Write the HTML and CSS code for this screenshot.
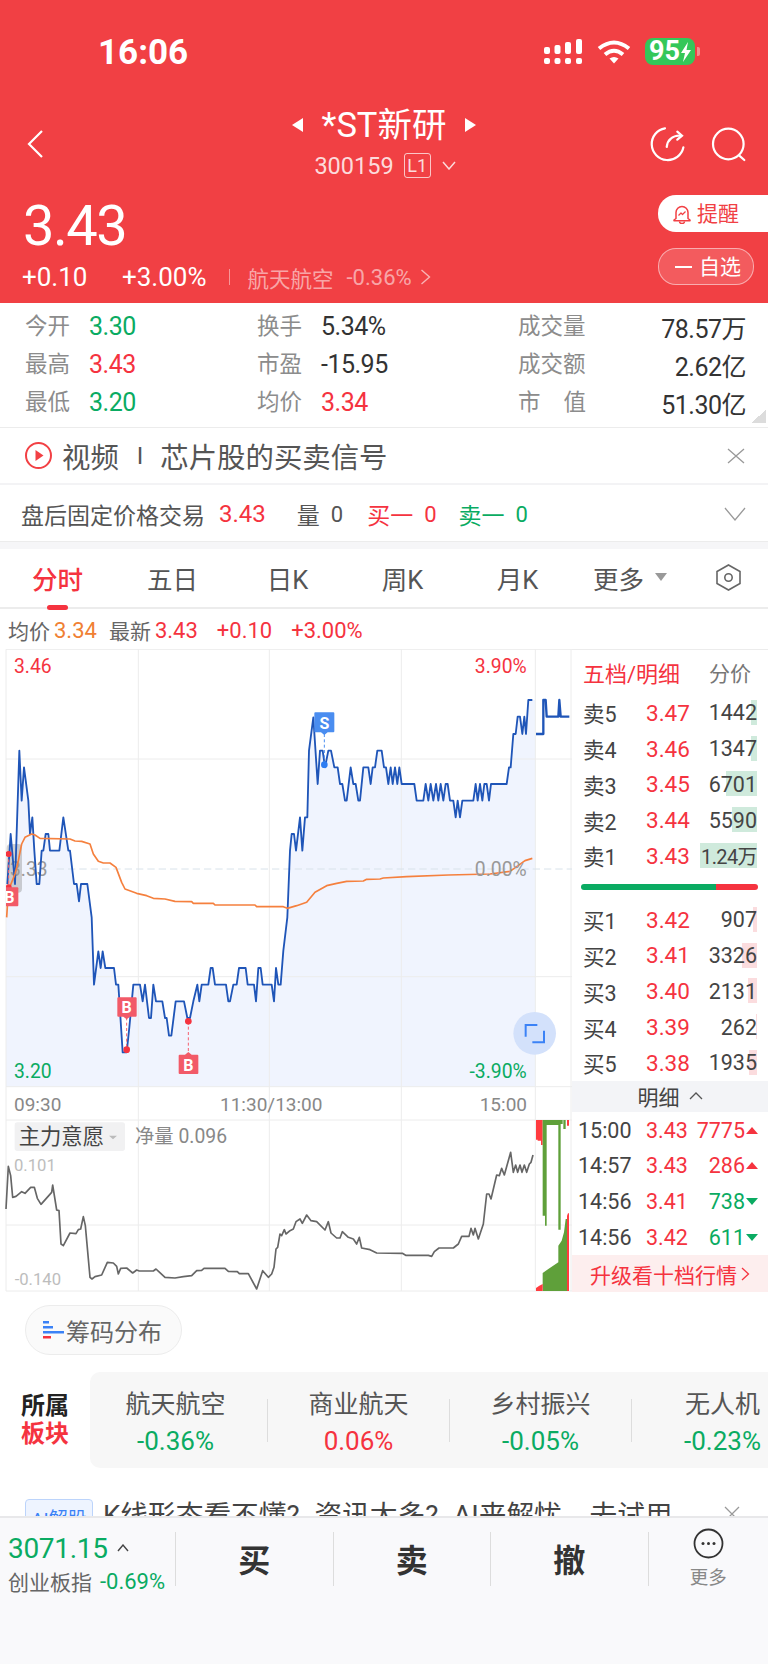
FILE: index.html
```html
<!DOCTYPE html>
<html lang="zh-CN">
<head>
    <meta charset="UTF-8">
    <meta name="viewport" content="width=device-width, initial-scale=1.0">
    <title>*ST新研</title>
    <link rel="stylesheet" href="styles.css">
</head>
<body>
<div class="page">
    <header class="header">
        <div class="status-bar">
            <span class="clock">16:06</span>
            <div class="status-icons">
                <svg class="signal" width="40" height="26" viewBox="0 0 40 26" fill="#fff">
                    <rect x="0" y="8" width="6" height="7" rx="2"/><rect x="10.5" y="6" width="6" height="9" rx="2"/><rect x="21" y="3" width="6" height="12" rx="2"/><rect x="32" y="0" width="6" height="15" rx="2"/>
                    <rect x="0" y="19" width="6" height="6" rx="2"/><rect x="10.5" y="19" width="6" height="6" rx="2"/><rect x="21" y="19" width="6" height="6" rx="2"/><rect x="32" y="19" width="6" height="6" rx="2"/>
                </svg>
                <svg class="wifi" width="34" height="24" viewBox="0 0 34 24" fill="none" stroke="#fff" stroke-width="4">
                    <path d="M2 8.5Q17 -3.5 32 8.5"/><path d="M8 14.5Q17 7 26 14.5"/>
                    <path d="M12.5 18.5Q17 15.5 21.5 18.5L17 23.5Z" fill="#fff" stroke="none"/>
                </svg>
                <div class="battery"><span>95</span><svg width="10" height="20" viewBox="0 0 10 20" fill="#fff"><path d="M7 0 0 11h4l-2 9 8-12H5.5z"/></svg></div>
                <i class="battery-nub"></i>
            </div>
        </div>
        <nav class="nav">
            <svg class="back" width="20" height="30" viewBox="0 0 20 30" fill="none" stroke="#fff" stroke-width="2.2"><path d="M17 2 4 15l13 13"/></svg>
            <div class="nav-center">
                <div class="stock-name">
                    <i class="tri-left"></i>
                    <span>*ST新研</span>
                    <i class="tri-right"></i>
                </div>
                <div class="stock-code">
                    <span>300159</span>
                    <b class="level">L1</b>
                    <svg width="14" height="9" viewBox="0 0 14 9" fill="none" stroke="#fff" stroke-opacity=".8" stroke-width="1.5"><path d="M1 1l6 7 6-7"/></svg>
                </div>
            </div>
            <div class="nav-right">
                <svg width="40" height="40" viewBox="0 0 40 40" fill="none" stroke="#fff" stroke-width="2.2" stroke-linecap="round">
                    <path d="M15 4.3A16 16 0 1 0 33.4 23.3"/>
                    <path d="M16.7 23Q18 12 30 11.5"/><path d="M27.3 7.7 32 11.7l-4.7 4"/>
                </svg>
                <svg width="44" height="40" viewBox="0 0 44 40" fill="none" stroke="#fff" stroke-width="2.2" stroke-linecap="round">
                    <circle cx="20.3" cy="20" r="15.3"/><path d="M31.3 31.7 36.3 36"/>
                </svg>
            </div>
        </nav>
        <div class="quote">
            <div class="quote-left">
                <div class="price">3.43</div>
                <div class="change-row">
                    <span class="chg-a">+0.10</span>
                    <span class="chg-b">+3.00%</span>
                    <i class="chg-sep"></i>
                    <span class="chg-sector">航天航空</span>
                    <span class="chg-pct">-0.36%</span>
                    <svg width="11" height="16" viewBox="0 0 11 16" fill="none" stroke="#fff" stroke-opacity=".6" stroke-width="1.4"><path d="M1.5 1l8 7-8 7"/></svg>
                </div>
            </div>
            <div class="quote-right">
                <div class="remind">
                    <svg width="20" height="20" viewBox="0 0 20 20" fill="none" stroke="#f24044" stroke-width="1.5" stroke-linejoin="round">
                        <path d="M4 14.5V8.5a6 6 0 0 1 12 0v6l2 1.5v.8H2V16z"/><path d="M7.5 17.5a2.5 2 0 0 0 5 0"/><path d="M6.5 11.5l2.5-2.5 1.5 1.5 3-3" stroke-width="1.2"/>
                    </svg>
                    <span>提醒</span>
                </div>
                <div class="watch"><i></i><span>自选</span></div>
            </div>
        </div>
    </header>

    <section class="stats">
        <div class="stat-col">
            <div class="stat"><span class="stat-label">今开</span><span class="val green">3.30</span></div>
            <div class="stat"><span class="stat-label">最高</span><span class="val red">3.43</span></div>
            <div class="stat"><span class="stat-label">最低</span><span class="val green">3.20</span></div>
        </div>
        <div class="stat-col">
            <div class="stat"><span class="stat-label">换手</span><span class="val">5.34%</span></div>
            <div class="stat"><span class="stat-label">市盈</span><span class="val">-15.95</span></div>
            <div class="stat"><span class="stat-label">均价</span><span class="val red">3.34</span></div>
        </div>
        <div class="stat-col wide">
            <div class="stat"><span class="stat-label">成交量</span><span class="val">78.57万</span></div>
            <div class="stat"><span class="stat-label">成交额</span><span class="val">2.62亿</span></div>
            <div class="stat"><span class="stat-label spaced">市<em></em>值</span><span class="val">51.30亿</span></div>
        </div>
    </section>

    <section class="video-row">
        <svg width="29" height="29" viewBox="0 0 29 29" fill="none" stroke="#f24044" stroke-width="2"><circle cx="14.5" cy="14.5" r="12.5"/><path d="M11.5 9v11l8-5.5z" fill="#f24044" stroke="none"/></svg>
        <span class="video-a">视频</span>
        <span class="video-bar">I</span>
        <span class="video-b">芯片股的买卖信号</span>
        <svg class="video-close" width="18" height="16" viewBox="0 0 18 16" fill="none" stroke="#999" stroke-width="1.3"><path d="M1 1l16 14M17 1 1 15"/></svg>
    </section>

    <section class="after-row">
        <span class="after-title">盘后固定价格交易</span>
        <span class="after-price red">3.43</span>
        <span class="after-a">量</span><span class="after-zero">0</span>
        <span class="after-b red">买一</span><span class="after-zero red">0</span>
        <span class="after-c green">卖一</span><span class="after-zero green">0</span>
        <svg class="after-arrow" width="22" height="14" viewBox="0 0 22 14" fill="none" stroke="#999" stroke-width="1.3"><path d="M1 1l10 12L21 1"/></svg>
    </section>
    <div class="band"></div>

    <section class="tabs">
        <span class="tab active">分时</span>
        <span class="tab">五日</span>
        <span class="tab">日K</span>
        <span class="tab">周K</span>
        <span class="tab">月K</span>
        <span class="tab-more">更多<i></i></span>
        <svg class="tab-gear" width="25" height="27" viewBox="0 0 25 27" fill="none" stroke="#666" stroke-width="1.6"><path d="M12.5 1 24 7.5v12L12.5 26 1 19.5v-12z"/><circle cx="12.5" cy="13.5" r="3.7"/></svg>
    </section>

    <section class="info-line">
        <span class="info-label">均价</span><span class="info-val orange">3.34</span>
        <span class="info-label second">最新</span><span class="info-val red">3.43</span>
        <span class="info-val red chg1">+0.10</span>
        <span class="info-val red chg2">+3.00%</span>
    </section>

    <section class="market">
        <svg class="chart" width="572" height="643" viewBox="0 15 1716 1929">
            <defs><clipPath id="left-clip"><rect x="18" y="15" width="200" height="1330"/></clipPath></defs>
            <path class="area" d="M22,720 32,570 45,720 58,320 65,470 72,370 85,470 90,570 97,520 103,620 110,720 118,720 125,620 130,620 137,570 145,570 150,620 178,620 190,520 205,620 210,620 222,720 230,720 237,772 243,720 262,720 275,820 282,1022 295,922 302,972 308,922 316,972 342,972 348,1022 355,1022 368,1225 380,1225 388,1150 400,1022 420,1022 428,1072 435,1022 447,1122 453,1122 460,1022 468,1072 487,1072 495,1122 500,1122 507,1175 514,1175 527,1072 552,1072 562,1122 570,1122 580,1072 592,1022 598,1072 605,1022 625,1022 632,972 638,972 645,1022 678,1022 685,1072 690,1072 700,1022 710,1022 717,972 737,972 743,1022 762,1022 768,1072 775,972 782,972 788,1022 815,1022 822,1072 828,972 835,1022 842,1022 850,920 862,820 870,620 875,570 882,570 888,620 900,520 907,620 915,520 922,520 927,320 940,220 953,420 960,320 968,320 975,370 985,320 993,320 1003,370 1013,370 1020,420 1027,420 1035,470 1040,470 1052,370 1060,420 1067,420 1075,470 1080,470 1090,370 1105,370 1112,420 1118,370 1125,370 1132,320 1145,320 1152,370 1158,370 1165,420 1172,370 1178,420 1185,370 1192,420 1198,370 1205,420 1243,420 1250,470 1270,470 1277,420 1285,470 1292,420 1300,470 1308,420 1315,470 1322,420 1330,470 1337,420 1343,420 1350,470 1360,470 1367,520 1373,470 1380,520 1387,470 1420,470 1427,420 1433,470 1440,420 1447,470 1453,420 1460,420 1467,470 1473,420 1520,420 1527,370 1532,370 1540,270 1547,270 1553,218 1560,218 1567,270 1573,218 1578,270 1585,168 1606,168 1606,1328 18,1328 18,820Z"/>

            <!-- grid -->
            <path class="grid" d="M18,16H1716M18,345H1716M18,998H1716M18,1328H1716M18,1428H1716M18,1743H1716M18,1941H1716"/>
            <path class="grid" d="M18,16V1941M415,16V1941M808,16V1941M1204,16V1941M1606,16V1941M1713,16V1941"/>
            <path class="zero" d="M170,675H1716"/>

            <rect class="smudge" x="20" y="600" width="46" height="146" rx="12"/>
            <text class="t-mid" x="30" y="695">3.33</text>

            <path class="price-line" d="M22,720 32,570 45,720 58,320 65,470 72,370 85,470 90,570 97,520 103,620 110,720 118,720 125,620 130,620 137,570 145,570 150,620 178,620 190,520 205,620 210,620 222,720 230,720 237,772 243,720 262,720 275,820 282,1022 295,922 302,972 308,922 316,972 342,972 348,1022 355,1022 368,1225 380,1225 388,1150 400,1022 420,1022 428,1072 435,1022 447,1122 453,1122 460,1022 468,1072 487,1072 495,1122 500,1122 507,1175 514,1175 527,1072 552,1072 562,1122 570,1122 580,1072 592,1022 598,1072 605,1022 625,1022 632,972 638,972 645,1022 678,1022 685,1072 690,1072 700,1022 710,1022 717,972 737,972 743,1022 762,1022 768,1072 775,972 782,972 788,1022 815,1022 822,1072 828,972 835,1022 842,1022 850,920 862,820 870,620 875,570 882,570 888,620 900,520 907,620 915,520 922,520 927,320 940,220 953,420 960,320 968,320 975,370 985,320 993,320 1003,370 1013,370 1020,420 1027,420 1035,470 1040,470 1052,370 1060,420 1067,420 1075,470 1080,470 1090,370 1105,370 1112,420 1118,370 1125,370 1132,320 1145,320 1152,370 1158,370 1165,420 1172,370 1178,420 1185,370 1192,420 1198,370 1205,420 1243,420 1250,470 1270,470 1277,420 1285,470 1292,420 1300,470 1308,420 1315,470 1322,420 1330,470 1337,420 1343,420 1350,470 1360,470 1367,520 1373,470 1380,520 1387,470 1420,470 1427,420 1433,470 1440,420 1447,470 1453,420 1460,420 1467,470 1473,420 1520,420 1527,370 1532,370 1540,270 1547,270 1553,218 1560,218 1567,270 1573,218 1578,270 1585,168 1597,168"/>
            <path class="price-line thick" d="M1608,270H1630V168H1637L1640,218H1675L1678,168 1682,218H1708"/>
            <path class="avg-line" d="M20,820 25,740 45,690 55,650 65,600 75,580 95,570 105,573 120,583 210,585 225,591 245,592 270,600 280,630 295,652 310,657 330,657 348,670 365,715 375,735 410,748 440,755 460,763 495,765 525,772 575,773 580,778 640,778 645,783 765,783 770,788 850,788 862,793 890,785 920,775 945,745 980,725 1010,718 1040,712 1090,711 1100,706 1140,705 1150,702 1220,698 1345,693 1470,690 1530,682 1575,650 1597,643"/>

            <!-- trade markers -->
            <g class="mark-b" clip-path="url(#left-clip)">
                <path class="dash-red" d="M26,630V730"/>
                <circle cx="26" cy="630" r="9"/><circle cx="26" cy="730" r="9"/>
                <rect x="0" y="730" width="55" height="57" rx="3"/>
                <text x="28" y="778">B</text>
            </g>
            <g class="mark-b">
                <path class="dash-red" d="M380,1120V1217"/><circle cx="380" cy="1217" r="10"/>
                <path d="M355,1060H407a3,3 0 0 1 3,3V1115a3,3 0 0 1 -3,3H390L380,1126 370,1118H355a3,3 0 0 1 -3,-3V1063a3,3 0 0 1 3,-3Z"/>
                <text x="380" y="1107">B</text>
            </g>
            <g class="mark-b">
                <path class="dash-red" d="M565,1132V1232"/><circle cx="565" cy="1132" r="10"/>
                <path d="M539,1232H555L565,1224 575,1232H592a3,3 0 0 1 3,3V1287a3,3 0 0 1 -3,3H539a3,3 0 0 1 -3,-3V1235a3,3 0 0 1 3,-3Z"/>
                <text x="565" y="1280">B</text>
            </g>
            <g class="mark-s">
                <path class="dash-blue" d="M973,270V362"/><circle cx="973" cy="362" r="10"/>
                <path d="M946,205H1000a3,3 0 0 1 3,3V262a3,3 0 0 1 -3,3H983L973,273 963,265H946a3,3 0 0 1 -3,-3V208a3,3 0 0 1 3,-3Z"/>
                <text x="973" y="254">S</text>
            </g>

            <text class="t-red" x="42" y="87">3.46</text>
            <text class="t-green" x="42" y="1302">3.20</text>
            <text class="t-red end" x="1580" y="87">3.90%</text>
            <text class="t-mid end" x="1580" y="695">0.00%</text>
            <text class="t-green end" x="1580" y="1302">-3.90%</text>

            <circle cx="1604" cy="1168" r="64" fill="#d3e1fb"/>
            <path d="M1577,1178V1143H1612M1632,1160V1195H1597" fill="none" stroke="#3b82f6" stroke-width="6"/>

            <text class="t-axis" x="42" y="1400">09:30</text>
            <text class="t-axis" x="660" y="1400">11:30/13:00</text>
            <text class="t-axis end" x="1581" y="1400">15:00</text>

            <!-- lower chart, same scale, shifted down -->
            <g transform="translate(0,1305)">
                <rect x="44" y="130" width="331" height="86" rx="8" fill="#f1f1f2"/>
                <text class="t-chip" x="56" y="195">主力意愿</text>
                <path d="M327,170H351L339,181Z" fill="#bbb"/>
                <text class="t-net" x="405" y="193">净量 0.096</text>
                <text class="t-light" x="42" y="275">0.101</text>
                <text class="t-light" x="44" y="617">-0.140</text>
                <path class="power-line" d="M18,390 25,262 32,290 38,355 48,352 65,338 75,343 92,325 103,325 112,358 123,376 155,340 158,318 170,393 177,395 183,495 190,500 210,462 228,464 235,452 242,450 250,413 256,440 270,595 276,600 285,593 305,588 322,550 340,552 350,562 355,585 362,568 380,567 398,582 410,573 418,576 460,576 468,570 495,595 525,597 550,593 575,590 590,575 605,574 612,568 675,568 685,577 712,578 718,584 745,584 770,630 788,575 805,595 815,585 822,565 828,510 833,505 840,465 845,470 853,452 858,465 870,455 880,450 888,428 900,420 907,433 920,408 933,425 950,428 975,453 985,428 993,462 1010,477 1020,477 1027,458 1045,475 1060,480 1070,495 1078,475 1085,507 1110,512 1130,522 1207,523 1217,529 1285,529 1295,532 1303,518 1317,507 1360,507 1375,495 1385,472 1407,472 1413,448 1420,468 1425,448 1435,480 1450,435 1460,345 1467,345 1473,360 1490,288 1498,290 1505,268 1513,288 1532,220 1540,280 1547,258 1553,280 1560,258 1566,280 1573,258 1580,280 1588,255 1593,250 1599,228"/>
            </g>
            <!-- money flow bars -->
            <g transform="translate(1185,1425)">
                <path fill="#ff3b3f" d="M423,3H443V78H438V65H428V62H423Z"/>
                <path fill="#5fa03a" d="M443,3H503V15H497V332H490V18H455V320H450V290H443Z"/>
                <path fill="#5fa03a" d="M505,3H512V30H505Z"/>
                <path fill="#ff3b3f" d="M516,3H522V20H516Z"/>
                <path fill="#5fa03a" d="M443,462 460,450 490,430V380L500,365 507,340 512,300H516V516H443Z"/>
                <path fill="#ff3b3f" d="M423,516V507L433,500 443,495V516Z"/>
                <path fill="#ff3b3f" d="M516,516V290L519,283H522V516Z"/>
            </g>
        </svg>

        <aside class="panel">
            <div class="panel-head"><span class="panel-title">五档/明细</span><span class="panel-sub">分价</span></div>
            <div class="order-rows">
                <div class="order"><span class="o-name">卖5</span><span class="o-price">3.47</span><i class="o-bar sell" style="width:6px"></i><span class="o-vol">1442</span></div>
                <div class="order"><span class="o-name">卖4</span><span class="o-price">3.46</span><i class="o-bar sell" style="width:6px"></i><span class="o-vol">1347</span></div>
                <div class="order"><span class="o-name">卖3</span><span class="o-price">3.45</span><i class="o-bar sell" style="width:31px"></i><span class="o-vol">6701</span></div>
                <div class="order"><span class="o-name">卖2</span><span class="o-price">3.44</span><i class="o-bar sell" style="width:25px"></i><span class="o-vol">5590</span></div>
                <div class="order"><span class="o-name">卖1</span><span class="o-price">3.43</span><i class="o-bar sell" style="width:57px"></i><span class="o-vol small">1.24万</span></div>
            </div>
            <div class="ratio"><i class="ratio-sell"></i><i class="ratio-buy"></i></div>
            <div class="order-rows">
                <div class="order"><span class="o-name">买1</span><span class="o-price">3.42</span><i class="o-bar buy" style="width:4px"></i><span class="o-vol">907</span></div>
                <div class="order"><span class="o-name">买2</span><span class="o-price">3.41</span><i class="o-bar buy" style="width:15px"></i><span class="o-vol">3326</span></div>
                <div class="order"><span class="o-name">买3</span><span class="o-price">3.40</span><i class="o-bar buy" style="width:9px"></i><span class="o-vol">2131</span></div>
                <div class="order"><span class="o-name">买4</span><span class="o-price">3.39</span><i class="o-bar buy" style="width:1px"></i><span class="o-vol">262</span></div>
                <div class="order"><span class="o-name">买5</span><span class="o-price">3.38</span><i class="o-bar buy" style="width:8px"></i><span class="o-vol">1935</span></div>
            </div>
            <div class="detail-head">
                <span>明细</span>
                <svg width="14" height="8" viewBox="0 0 14 8" fill="none" stroke="#555" stroke-width="1.3"><path d="M1 7l6-6 6 6"/></svg>
            </div>
            <div class="tick"><span class="t-time">15:00</span><span class="t-price">3.43</span><span class="t-vol red">7775</span><i class="up"></i></div>
            <div class="tick"><span class="t-time">14:57</span><span class="t-price">3.43</span><span class="t-vol red">286</span><i class="up"></i></div>
            <div class="tick"><span class="t-time">14:56</span><span class="t-price">3.41</span><span class="t-vol green">738</span><i class="down"></i></div>
            <div class="tick"><span class="t-time">14:56</span><span class="t-price">3.42</span><span class="t-vol green">611</span><i class="down"></i></div>
            <div class="upgrade">
                <span>升级看十档行情</span>
                <svg width="9" height="14" viewBox="0 0 9 14" fill="none" stroke="#f5333f" stroke-width="1.3"><path d="M1 1l6.5 6L1 13"/></svg>
            </div>
        </aside>
    </section>

    <div class="chip-row">
        <div class="chip">
            <svg width="21" height="18" viewBox="0 0 21 18">
                <rect x="0" y="0" width="6" height="2.5" fill="#3b82f6"/><rect x="0" y="5" width="10" height="2.5" fill="#3b82f6"/><rect x="0" y="10" width="21" height="2.5" fill="#3b82f6"/><rect x="0" y="15" width="8" height="2.5" fill="#f5333f"/>
            </svg>
            <span>筹码分布</span>
        </div>
    </div>

    <section class="sectors">
        <div class="sector-head"><span>所属</span><span class="red">板块</span></div>
        <div class="sector-card">
            <div class="sector"><span class="s-name">航天航空</span><span class="s-pct green">-0.36%</span></div>
            <i class="s-sep"></i>
            <div class="sector"><span class="s-name">商业航天</span><span class="s-pct red">0.06%</span></div>
            <i class="s-sep"></i>
            <div class="sector"><span class="s-name">乡村振兴</span><span class="s-pct green">-0.05%</span></div>
            <i class="s-sep"></i>
            <div class="sector"><span class="s-name">无人机</span><span class="s-pct green">-0.23%</span></div>
        </div>
    </section>

    <section class="ai-row">
        <span class="ai-tag">AI解股</span>
        <span class="ai-text">K线形态看不懂? 资讯太多? AI来解忧，去试用</span>
        <svg width="16" height="16" viewBox="0 0 16 16" fill="none" stroke="#999" stroke-width="1.3"><path d="M1 1l14 14M15 1 1 15"/></svg>
    </section>

    <footer class="bottom-bar">
        <div class="index-box">
            <div class="index-top"><span class="index-num">3071.15</span><svg width="12" height="8" viewBox="0 0 12 8" fill="none" stroke="#444" stroke-width="1.4"><path d="M1 7l5-6 5 6"/></svg></div>
            <div class="index-sub"><span>创业板指</span><span class="green index-pct">-0.69%</span></div>
        </div>
        <div class="action">买</div>
        <div class="action">卖</div>
        <div class="action">撤</div>
        <div class="more">
            <svg width="31" height="31" viewBox="0 0 31 31" fill="none" stroke="#333" stroke-width="1.8"><circle cx="15.5" cy="15.5" r="14"/><g fill="#333" stroke="none"><circle cx="10" cy="15.5" r="1.5"/><circle cx="15.5" cy="15.5" r="1.5"/><circle cx="21" cy="15.5" r="1.5"/></g></svg>
            <span>更多</span>
        </div>
    </footer>
</div>
</body>
</html>
```

FILE: styles.css
```css
* {
    box-sizing: border-box;
}

body {
    margin: 0;
    background: #fff;
    font-family: Roboto, "Noto Sans CJK SC", sans-serif;
    color: #333;
}

i, em {
    font-style: normal;
}

.page {
    width: 768px;
    height: 1665px;
    overflow: hidden;
}

.red { color: #f5333f; }
.green { color: #0aab62; }
.orange { color: #f08033; }

/* header */
.header {
    height: 303px;
    background: #f14044;
    color: #fff;
}

.status-bar {
    height: 104px;
    display: flex;
    justify-content: space-between;
    padding: 38px 68px 0 98px;
}

.clock {
    font-size: 35px;
    font-weight: 700;
    line-height: 30px;
}

.status-icons {
    display: flex;
    align-items: flex-start;
}

.signal { margin: 1px 0 0 0; }
.wifi { margin: 2px 0 0 13px; }

.battery {
    width: 50px;
    height: 27px;
    margin-left: 14px;
    border-radius: 8px;
    background: #34c759;
    display: flex;
    align-items: center;
    justify-content: center;
    gap: 1px;
    font-size: 27px;
    font-weight: 700;
    line-height: 27px;
}

.battery-nub {
    width: 3px;
    height: 9px;
    margin: 9px 0 0 2px;
    border-radius: 0 2px 2px 0;
    background: rgba(255, 255, 255, .4);
}

.nav {
    height: 76px;
    display: grid;
    grid-template-columns: 1fr auto 1fr;
    align-items: center;
}

.back { margin-left: 25px; margin-top: 4px; }

.nav-center {
    display: flex;
    flex-direction: column;
    align-items: center;
}

.stock-name {
    display: flex;
    align-items: center;
    gap: 19px;
    height: 38px;
    font-size: 34.5px;
    line-height: 38px;
}

.tri-left, .tri-right {
    width: 0;
    height: 0;
    border-top: 7px solid transparent;
    border-bottom: 7px solid transparent;
}

.tri-left { border-right: 11px solid #fff; }
.tri-right { border-left: 11px solid #fff; }

.stock-code {
    display: flex;
    align-items: center;
    height: 26px;
    margin-top: 9px;
    margin-left: 2px;
    font-size: 23.5px;
    color: rgba(255, 255, 255, .82);
}

.level {
    width: 27px;
    height: 25px;
    margin: 0 11px 0 10px;
    border: 1px solid rgba(255, 255, 255, .7);
    border-radius: 3px;
    font-size: 18px;
    font-weight: 400;
    line-height: 23px;
    text-align: center;
}

.nav-right {
    display: flex;
    justify-content: flex-end;
    gap: 18px;
    padding-right: 16px;
    margin-top: 4px;
}

.quote {
    height: 123px;
    display: flex;
    justify-content: space-between;
}

.quote-left { padding-left: 23px; }

.price {
    height: 62px;
    margin-top: 15px;
    font-size: 56px;
    line-height: 62px;
    letter-spacing: -1.5px;
}

.change-row {
    display: flex;
    align-items: center;
    height: 30px;
    margin-top: 5px;
}

.chg-a { width: 100px; font-size: 26px; margin-left: -1px; }
.chg-b { font-size: 26px; }

.chg-sep {
    width: 1px;
    height: 16px;
    margin: 0 18px 0 22px;
    background: rgba(255, 255, 255, .45);
}

.chg-sector {
    font-size: 21.5px;
    color: rgba(255, 255, 255, .55);
}

.chg-pct {
    margin: 0 8px 0 13px;
    font-size: 22px;
    color: rgba(255, 255, 255, .55);
}

.quote-right {
    width: 110px;
    padding-top: 15px;
}

.remind {
    height: 37px;
    padding: 0 0 3px 14px;
    display: flex;
    align-items: center;
    gap: 5px;
    background: #fff;
    border-radius: 18px 0 0 18px;
    color: #f14044;
    font-size: 21px;
}

.remind svg { margin-top: 3px; }

.watch {
    width: 96px;
    height: 37px;
    margin-top: 16px;
    display: flex;
    align-items: center;
    padding: 0 0 3px 16px;
    gap: 7px;
    border: 1px solid rgba(255, 255, 255, .5);
    border-radius: 18px;
    background: rgba(255, 255, 255, .14);
    font-size: 21px;
}

.watch i {
    width: 17px;
    height: 2px;
    margin-top: 3px;
    background: #fff;
}

/* stats block */
.stats {
    height: 125px;
    position: relative;
    display: grid;
    grid-template-columns: 232px 261px 1fr;
    padding: 4px 22px 0 25px;
    border-bottom: 1px solid #ececec;
}

.stats::after {
    content: "";
    position: absolute;
    right: 2px;
    bottom: 4px;
    width: 15px;
    height: 13px;
    background: linear-gradient(to bottom right, transparent 50%, #dcdcdc 50%);
}

.stat {
    display: flex;
    align-items: center;
    height: 38px;
}

.wide .stat { justify-content: space-between; }

.stat-label {
    width: 64px;
    margin-bottom: 4px;
    font-size: 22.5px;
    color: #8c8c8c;
}

.wide .stat-label { width: auto; }

.stat-label.spaced {
    display: flex;
    justify-content: space-between;
    width: 68px;
}

.val {
    font-size: 25px;
    letter-spacing: -.5px;
    padding-top: 1px;
}

/* rows under the stats */
.video-row {
    height: 57px;
    display: flex;
    align-items: center;
    padding: 0 23px 0 24px;
    border-bottom: 2px solid #f3f3f5;
    color: #555;
    font-size: 28.4px;
}

.video-a { margin-left: 9px; }
.video-bar { margin: 0 17px 0 18px; font-size: 24px; }
.video-close { margin-left: auto; }

.after-row {
    height: 56px;
    display: flex;
    align-items: center;
    padding: 2px 22px 0 21px;
    font-size: 23px;
    color: #555;
}

.after-price { margin-left: 14px; font-size: 24px; }
.after-a { margin-left: 31px; }
.after-b { margin-left: 24px; }
.after-c { margin-left: 22px; }
.after-zero { margin-left: 11px; font-size: 22px; }
.after-arrow { margin-left: auto; }

.band {
    height: 8px;
    background: #f6f6f8;
    border-top: 1px solid #ececec;
}

.tabs {
    height: 60px;
    display: flex;
    align-items: center;
    padding-bottom: 2px;
    border-bottom: 2px solid #ececec;
    font-size: 25.5px;
    color: #555;
}

.tab {
    position: relative;
    width: 115px;
    text-align: center;
}

.tab.active {
    color: #f5333f;
    font-weight: 500;
}

.tab.active::after {
    content: "";
    position: absolute;
    left: 47px;
    bottom: -14px;
    width: 21px;
    height: 5px;
    border-radius: 3px;
    background: #f5333f;
}

.tab-more {
    margin-left: 18px;
    display: flex;
    align-items: center;
    gap: 11px;
}

.tab-more i {
    width: 0;
    height: 0;
    border-left: 6px solid transparent;
    border-right: 6px solid transparent;
    border-top: 8px solid #999;
}

.tab-gear { margin-left: auto; margin-right: 27px; }

.info-line {
    height: 40px;
    display: flex;
    align-items: center;
    padding: 2px 0 0 8px;
    font-size: 21px;
}

.info-label { color: #666; }
.info-val { margin-left: 4px; font-size: 22px; }
.second { margin-left: 12px; }
.info-val.chg1 { margin-left: 19px; }
.info-val.chg2 { margin-left: 19px; }

/* chart + order book */
.market {
    height: 643px;
    display: flex;
}

.chart {
    display: block;
    flex: 0 0 572px;
}

.chart text {
    font-family: Roboto, "Noto Sans CJK SC", sans-serif;
    font-size: 58px;
}

.chart .end { text-anchor: end; }

.area { fill: #f0f4fe; }
.grid { fill: none; stroke: #ececec; stroke-width: 3; }
.zero { fill: none; stroke: #d8e2ea; stroke-width: 3; stroke-dasharray: 22 12; }
.price-line { fill: none; stroke: #1f55b8; stroke-width: 5.5; stroke-linejoin: round; }
.price-line.thick { stroke-width: 7; }
.avg-line { fill: none; stroke: #f5803e; stroke-width: 5; stroke-linejoin: round; }
.power-line { fill: none; stroke: #666; stroke-width: 5; stroke-linejoin: round; }
.smudge { fill: #8d8d8d; opacity: .4; }

.t-red { fill: #f5333f; }
.t-green { fill: #0aab62; }
.t-mid { fill: #999; }
.chart .t-axis { fill: #888; font-size: 57px; }
.chart .t-chip { fill: #444; font-size: 64px; }
.chart .t-net { fill: #888; font-size: 58px; }
.chart .t-light { fill: #bdbdbd; font-size: 50px; }

.mark-b { fill: #f25a68; }
.mark-b circle { fill: #f5333f; }
.mark-s { fill: #4a8df0; }
.mark-s circle { fill: #2d7cf2; }
.chart .mark-b text, .chart .mark-s text {
    fill: #fff;
    font-size: 48px;
    font-weight: 700;
    text-anchor: middle;
}

.dash-red { fill: none; stroke: #f5606e; stroke-width: 3; stroke-dasharray: 9 7; }
.dash-blue { fill: none; stroke: #4a8df0; stroke-width: 3; stroke-dasharray: 9 7; }

.panel {
    flex: 1;
    display: flex;
    flex-direction: column;
    border-top: 1px solid #ececec;
    background: #fff;
}

.panel-head {
    height: 45px;
    display: flex;
    align-items: center;
    justify-content: space-between;
    padding: 0 17px 0 12px;
}

.panel-title { color: #f5333f; font-size: 22px; margin-left: -1px; }
.panel-sub { color: #777; font-size: 21px; }

.order {
    position: relative;
    height: 35.8px;
    display: flex;
    align-items: center;
    padding-left: 11px;
    font-size: 22px;
}

.o-name { width: 63px; color: #444; font-size: 21.5px; }
.o-price { color: #f5333f; font-size: 22.5px; }

.o-vol {
    position: relative;
    margin-left: auto;
    margin-right: 11px;
    font-size: 21.5px;
    color: #444;
}

.o-vol.small {
    font-size: 20px;
    letter-spacing: -.6px;
}

.o-bar {
    position: absolute;
    right: 11px;
    top: 5px;
    height: 25px;
}

.o-bar.sell { background: #cfeadc; }
.o-bar.buy { background: #fbdcde; }

.ratio {
    height: 6px;
    margin: 10px 10px 12px 9px;
    display: flex;
    border-radius: 3px;
    overflow: hidden;
}

.ratio-sell { width: 76%; background: #0aab62; }
.ratio-buy { flex: 1; background: #f5333f; }

.detail-head {
    height: 31px;
    display: flex;
    align-items: center;
    justify-content: center;
    gap: 9px;
    background: #f3f4f7;
    font-size: 21px;
    color: #444;
}

.tick {
    height: 36px;
    display: flex;
    align-items: center;
    padding: 1px 10px 0 6px;
    font-size: 21.5px;
}

.t-time { width: 68px; color: #444; }
.t-price { color: #f5333f; }
.t-vol { margin-left: auto; margin-right: 1px; }

.up, .down {
    width: 0;
    height: 0;
    border-left: 6.5px solid transparent;
    border-right: 6.5px solid transparent;
}

.up { border-bottom: 7px solid #f5333f; }
.down { border-top: 7px solid #0aab62; }

.upgrade {
    height: 37px;
    display: flex;
    align-items: center;
    justify-content: center;
    gap: 4px;
    background: #fdeeee;
    color: #f5333f;
    font-size: 21px;
}

/* chip + sectors */
.chip-row {
    padding: 13px 0 0 25px;
}

.chip {
    width: 157px;
    height: 50px;
    display: flex;
    align-items: center;
    gap: 2px;
    padding-left: 17px;
    border: 1px solid #ececec;
    border-radius: 25px;
    background: #fafafa;
    color: #666;
    font-size: 24px;
}

.sectors {
    height: 96px;
    margin-top: 17px;
    display: flex;
}

.sector-head {
    flex: 0 0 90px;
    display: flex;
    flex-direction: column;
    justify-content: center;
    padding-left: 21px;
    font-size: 24px;
    font-weight: 700;
    line-height: 28px;
    color: #222;
}

.sector-card {
    flex: 1;
    display: flex;
    align-items: center;
    overflow: hidden;
    padding-top: 6px;
    border-radius: 10px 0 0 10px;
    background: #f7f7f7;
}

.sector {
    flex: 0 0 181px;
    display: flex;
    flex-direction: column;
    align-items: center;
    gap: 6px;
}

.sector:first-child {
    flex-basis: 177px;
    padding-right: 6px;
}

.s-name { font-size: 25px; color: #555; line-height: 30px; white-space: nowrap; }
.s-pct { font-size: 26px; line-height: 30px; }

.s-sep {
    flex: 0 0 1px;
    height: 43px;
    margin-top: -6px;
    background: #ddd;
}

.ai-row {
    height: 17px;
    margin-top: 31px;
    display: flex;
    align-items: flex-start;
    overflow: hidden;
    padding: 0 28px 0 25px;
}

.ai-tag {
    width: 68px;
    height: 36px;
    border: 1px solid #bcd4fb;
    border-radius: 4px;
    background: #eef4ff;
    color: #3b82f6;
    font-size: 19px;
    line-height: 40px;
    text-align: center;
}

.ai-text {
    margin-left: 10px;
    font-size: 27.7px;
    line-height: 34px;
    word-spacing: 8px;
    color: #444;
    white-space: nowrap;
}

.ai-row svg {
    margin: 7px 0 0 auto;
}

/* bottom toolbar */
.bottom-bar {
    height: 148px;
    display: flex;
    align-items: flex-start;
    border-top: 2px solid #e8e8ea;
    background: #f9f9fb;
}

.index-box {
    flex: 0 0 176px;
    height: 54px;
    margin-top: 14px;
    padding-left: 8px;
    border-right: 1px solid #ddd;
}

.index-top {
    display: flex;
    align-items: center;
    gap: 9px;
    height: 32px;
}

.index-num {
    color: #0aab62;
    font-size: 28px;
    letter-spacing: -.3px;
}

.index-sub {
    display: flex;
    align-items: center;
    height: 34px;
    font-size: 21px;
    color: #666;
}

.index-pct { margin-left: 8px; font-size: 22px; }

.action {
    flex: 0 0 157.5px;
    height: 54px;
    margin-top: 14px;
    border-right: 1px solid #ddd;
    font-size: 32px;
    font-weight: 700;
    line-height: 58px;
    text-align: center;
    color: #333;
}

.more {
    flex: 1;
    margin-top: 10px;
    display: flex;
    flex-direction: column;
    align-items: center;
    gap: 4px;
    color: #888;
    font-size: 18.5px;
}
```
